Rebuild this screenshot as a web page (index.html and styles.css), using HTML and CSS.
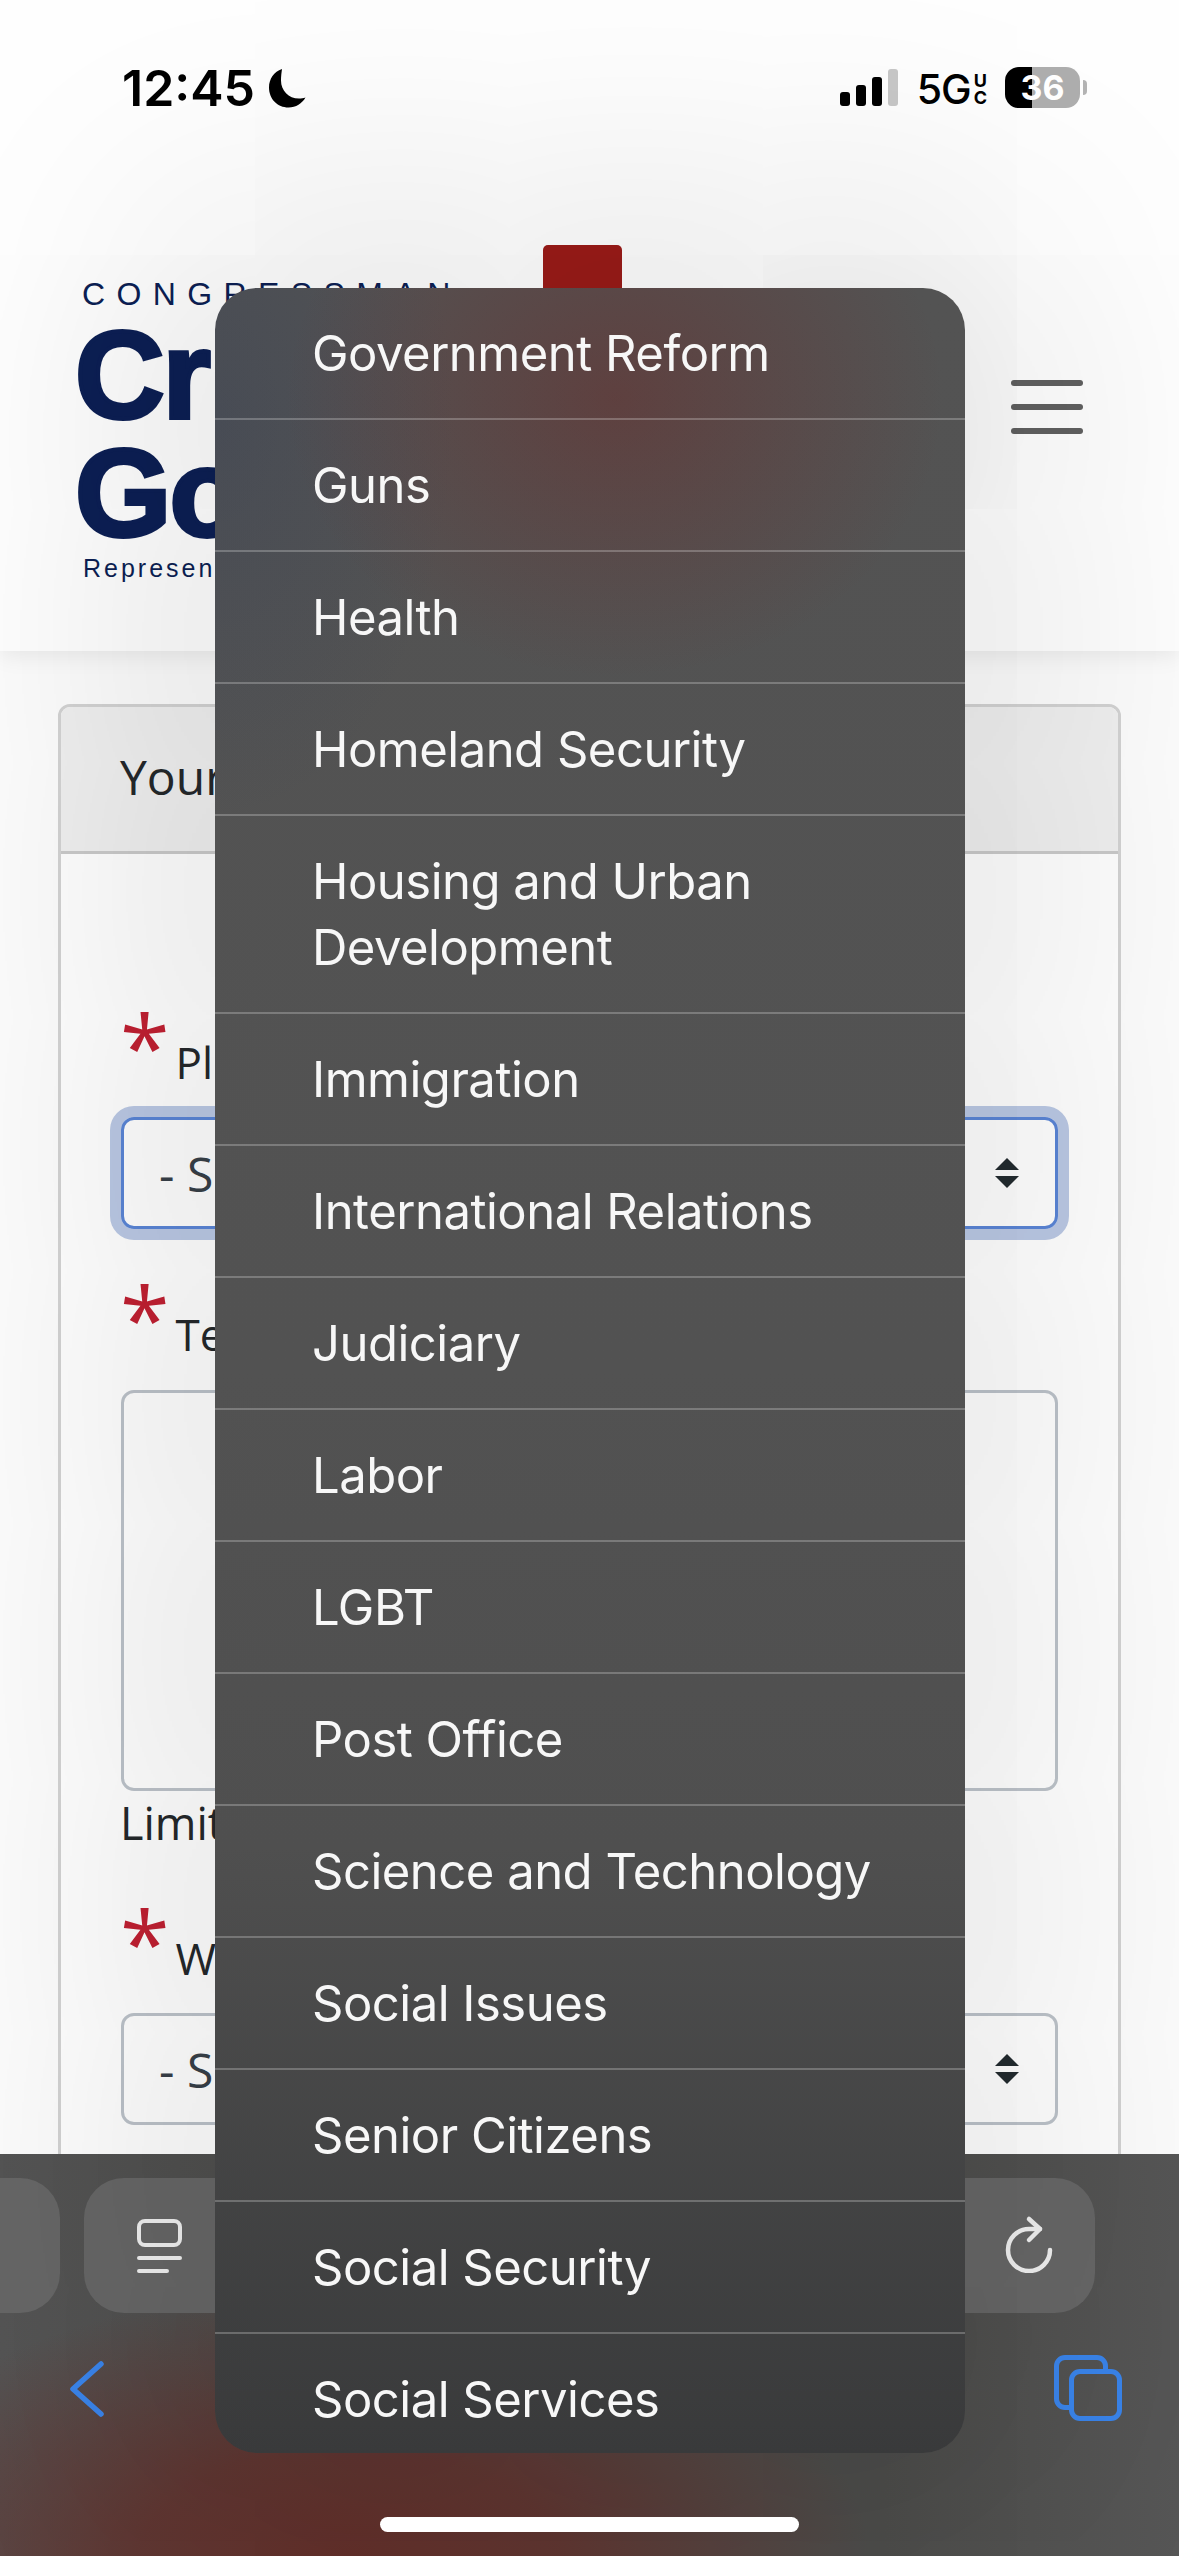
FILE: index.html
```html
<!DOCTYPE html>
<html lang="en">
<head>
<meta charset="utf-8">
<title>Contact form</title>
<link rel="stylesheet" href="styles.css">
</head>
<body>
<div class="page">
  <header class="site-header">
    <div class="logo">
      <div class="logo-kicker">CONGRESSMAN</div>
      <div class="logo-name logo-first">Cr</div>
      <div class="logo-name">Go</div>
      <div class="logo-sub">Represen</div>
      <div class="logo-flag"></div>
    </div>
    <div class="burger"><span></span><span></span><span></span></div>
  </header>

  <section class="card">
    <div class="card-head">Your</div>
    <div class="card-body">
      <div class="label"><span class="req">*</span>Pl</div>
      <div class="control select focused">- S
        <svg class="updown" viewBox="0 0 24 30"><path d="M12 0 24 12H0Z"/><path d="M0 18H24L12 30Z"/></svg>
      </div>
      <div class="label spaced"><span class="req">*</span>Te</div>
      <div class="control textarea"></div>
      <div class="hint">Limit</div>
      <div class="label spaced-lg"><span class="req">*</span>W</div>
      <div class="control select short">- S
        <svg class="updown" viewBox="0 0 24 30"><path d="M12 0 24 12H0Z"/><path d="M0 18H24L12 30Z"/></svg>
      </div>
    </div>
  </section>
</div>

<div class="status-bar">
  <div class="clock">12:45
    <svg class="moon" viewBox="0 0 38 40"><path d="M14 1C6 3.500 1 11 1 19.500 1 31 9.500 39.500 20.500 39.500 28 39.500 34 35.500 37.500 29.500 35.500 30.300 33.300 30.600 31 30.600 20.500 30.600 13 22.500 13 12.500 13 8.500 13.500 4.500 14 1Z"/></svg>
  </div>
  <div class="indicators">
    <div class="signal"><i class="s1"></i><i class="s2"></i><i class="s3"></i><i class="s4"></i></div>
    <div class="network">5G<span class="uc"><b>U</b><b>C</b></span></div>
    <div class="battery"><span class="battery-level">36</span><i class="battery-nub"></i></div>
  </div>
</div>

<div class="toolbar">
  <div class="tab-row">
    <div class="pill pill-prev"></div>
    <div class="pill pill-main">
      <svg class="reader" viewBox="0 0 45 54" fill="none" stroke="#efefef" stroke-linecap="round"><rect x="2" y="2" width="41" height="24" rx="6" stroke-width="4"/><path d="M2 39H43M2 52H30" stroke-width="4"/></svg>
      <svg class="reload" viewBox="0 0 48 58" fill="none" stroke="#efefef" stroke-width="4.500" stroke-linecap="round" stroke-linejoin="round"><path d="M45 35A21 21 0 1 1 24 14H35"/><path d="M24 4 35 14 24 25"/></svg>
    </div>
  </div>
  <div class="nav-row">
    <svg class="back" viewBox="0 0 34 56" fill="none" stroke="#3a84ea" stroke-width="5.500" stroke-linecap="round" stroke-linejoin="round"><path d="M31 3 3 28 31 53"/></svg>
    <svg class="tabs" viewBox="0 0 68 66" fill="none" stroke="#3a84ea" stroke-width="5"><path d="M16 52.500H11A8.500 8.500 0 0 1 2.500 44V11A8.500 8.500 0 0 1 11 2.500H43A8.500 8.500 0 0 1 51.500 11V16"/><rect x="17.500" y="16.500" width="48" height="47" rx="8.500"/></svg>
  </div>
</div>

<div class="menu">
  <div class="row">Government Reform</div>
  <div class="row">Guns</div>
  <div class="row">Health</div>
  <div class="row">Homeland Security</div>
  <div class="row">Housing and Urban<br>Development</div>
  <div class="row">Immigration</div>
  <div class="row">International Relations</div>
  <div class="row">Judiciary</div>
  <div class="row">Labor</div>
  <div class="row">LGBT</div>
  <div class="row">Post Office</div>
  <div class="row">Science and Technology</div>
  <div class="row">Social Issues</div>
  <div class="row">Senior Citizens</div>
  <div class="row">Social Security</div>
  <div class="row">Social Services</div>
</div>

<div class="home-bar"></div>
</body>
</html>
```

FILE: styles.css
```css
* { box-sizing: border-box; }
html, body { margin: 0; padding: 0; }
body {
  width: 1179px;
  height: 2556px;
  overflow: hidden;
  position: relative;
  background: #fcfcfc;
  font-family: "Open Sans", sans-serif;
  color: #212529;
}

/* site header */
.site-header {
  height: 651px;
  padding: 281px 96px 0 75px;
  display: flex;
  justify-content: space-between;
  align-items: flex-start;
  background: #fefefe;
  box-shadow: 0 4px 22px rgba(0,0,0,.08);
  position: relative;
}
.logo { position: relative; color: #0c1f54; font-family: "Liberation Sans", sans-serif; }
.logo-kicker { font-size: 32px; line-height: 26px; letter-spacing: 11.400px; margin-left: 7px; }
.logo-name {
  font-size: 124px;
  line-height: 118px;
  font-weight: 700;
  letter-spacing: -2px;
  -webkit-text-stroke: 4px #0c1f54;
}
.logo-first { margin-top: 9px; }
.logo-sub { font-size: 25px; line-height: 30px; letter-spacing: 3px; margin: 1px 0 0 8px; }
.logo-flag {
  position: absolute;
  left: 468px;
  top: -36px;
  width: 79px;
  height: 60px;
  background: #9a1b18;
  border-radius: 5px 5px 0 0;
}
.burger { display: flex; flex-direction: column; gap: 18px; width: 72px; margin-top: 99px; }
.burger span { display: block; height: 6px; border-radius: 3px; background: #606060; }

/* form card */
.card {
  margin: 53px 58px 0;
  border: 3px solid #d2d2d2;
  border-radius: 12px;
  height: 1900px;
  overflow: hidden;
  background: #fefefe;
}
.card-head {
  height: 147px;
  padding: 0 0 0 59px;
  background: #efefef;
  border-bottom: 3px solid #c9c9c9;
  font-size: 48px;
  line-height: 140px;
  color: #24282b;
}
.card-body { padding: 178px 60px 0; }
.label { height: 60px; font-size: 44px; line-height: 60px; color: #24282b; white-space: nowrap; margin-bottom: 25px; }
.req { font-size: 90px; line-height: 0; color: #c02032; margin-right: 6px; margin-left: -1px; position: relative; top: 1px; }
.spaced { margin-top: 75px; margin-bottom: 26px; }
.spaced-lg { margin-top: 77px; }
.control { border: 3px solid #bcc2c9; border-radius: 13px; background: transparent; }
.select {
  height: 112px;
  display: flex;
  align-items: center;
  justify-content: space-between;
  padding: 0 36px 0 35px;
  font-size: 48px;
  color: #384048;
}
.short { height: 112px; }
.focused { border-color: #5a85d6; box-shadow: 0 0 0 11px #bac8e4; }
.updown { width: 24px; height: 30px; fill: #222b2f; }
.textarea { height: 401px; }
.hint { height: 60px; font-size: 45px; line-height: 64px; color: #24282b; margin-left: -1px; }

/* status bar */
.status-bar {
  position: absolute;
  left: 0;
  top: 0;
  width: 100%;
  height: 130px;
  display: flex;
  justify-content: space-between;
  align-items: flex-start;
  padding: 58px 99px 0 122px;
  font-family: Inter, sans-serif;
  color: #000;
}
.clock { display: flex; align-items: center; gap: 13px; font-size: 50px; line-height: 60px; font-weight: 600; }
.moon { width: 38px; height: 40px; fill: #000; }
.indicators { display: flex; align-items: flex-start; }
.signal { display: flex; align-items: flex-end; gap: 6px; height: 37px; margin-top: 11px; }
.signal i { display: block; width: 10px; border-radius: 3px; background: #000; }
.s1 { height: 14px; }
.s2 { height: 21px; }
.s3 { height: 29px; }
.signal .s4 { height: 37px; background: #c8c8c8; }
.network { display: flex; align-items: center; margin-left: 19px; font-size: 41px; line-height: 44px; margin-top: 9px; font-weight: 500; letter-spacing: -1px; }
.uc { display: flex; flex-direction: column; margin-left: 3px; }
.uc b { font-size: 18px; line-height: 17px; font-weight: 700; text-align: center; letter-spacing: 0; }
.battery { position: relative; margin-left: 18px; margin-top: 9px; }
.battery-level {
  display: block;
  width: 75px;
  height: 41px;
  border-radius: 14px;
  background: linear-gradient(90deg, #000 36%, #aeaeae 36%);
  color: #fff;
  font-size: 34px;
  line-height: 41px;
  font-weight: 700;
  text-align: center;
}
.battery-nub {
  position: absolute;
  left: 78px;
  top: 13px;
  width: 4px;
  height: 15px;
  border-radius: 0 4px 4px 0;
  background: #b4b4b4;
}

/* browser toolbar */
.toolbar {
  position: absolute;
  left: 0;
  top: 2154px;
  width: 100%;
  height: 402px;
  background:
    radial-gradient(ellipse 520px 270px at 350px 402px, #622f2a 0%, rgba(98,47,42,.8) 40%, rgba(98,47,42,0) 100%),
    linear-gradient(90deg, #545454, #4c4c4a 30%, #4c4c4a 75%, #565656);
}
.tab-row { display: flex; gap: 24px; padding-top: 24px; }
.pill { height: 135px; background: #666; }
.pill-prev { width: 60px; border-radius: 0 40px 40px 0; }
.pill-main {
  width: 1011px;
  border-radius: 40px;
  display: flex;
  align-items: center;
  justify-content: space-between;
  padding: 0 42px 0 53px;
}
.reader { width: 45px; height: 54px; }
.reload { width: 48px; height: 58px; margin-top: -4px; }
.nav-row { display: flex; justify-content: space-between; align-items: flex-start; padding: 42px 57px 0 70px; }
.back { width: 34px; height: 56px; margin-top: 6px; }
.tabs { width: 68px; height: 66px; }

/* native select menu */
.menu {
  position: absolute;
  left: 215px;
  top: 288px;
  width: 750px;
  height: 2165px;
  overflow: hidden;
  border-radius: 42px;
  font-family: Inter, sans-serif;
  font-size: 49px;
  letter-spacing: -0.500px;
  color: #f7f7f7;
  background:
    radial-gradient(ellipse 330px 280px at 400px 110px, rgba(110,38,36,.42) 0%, rgba(110,38,36,0) 100%),
    radial-gradient(ellipse 240px 400px at 0 130px, rgba(50,62,88,.34) 0%, rgba(50,62,88,0) 100%),
    linear-gradient(180deg, #535353 0%, #525252 50%, #4f4f4f 72%, #393a3b 100%);
  box-shadow: 0 0 300px 80px rgba(0,0,0,.11);
}
.row { padding: 33px 0 31px 97px; line-height: 66px; border-bottom: 2px solid rgba(255,255,255,.24); }

.home-bar {
  position: absolute;
  left: 380px;
  top: 2517px;
  width: 419px;
  height: 15px;
  border-radius: 8px;
  background: #fff;
}
```
